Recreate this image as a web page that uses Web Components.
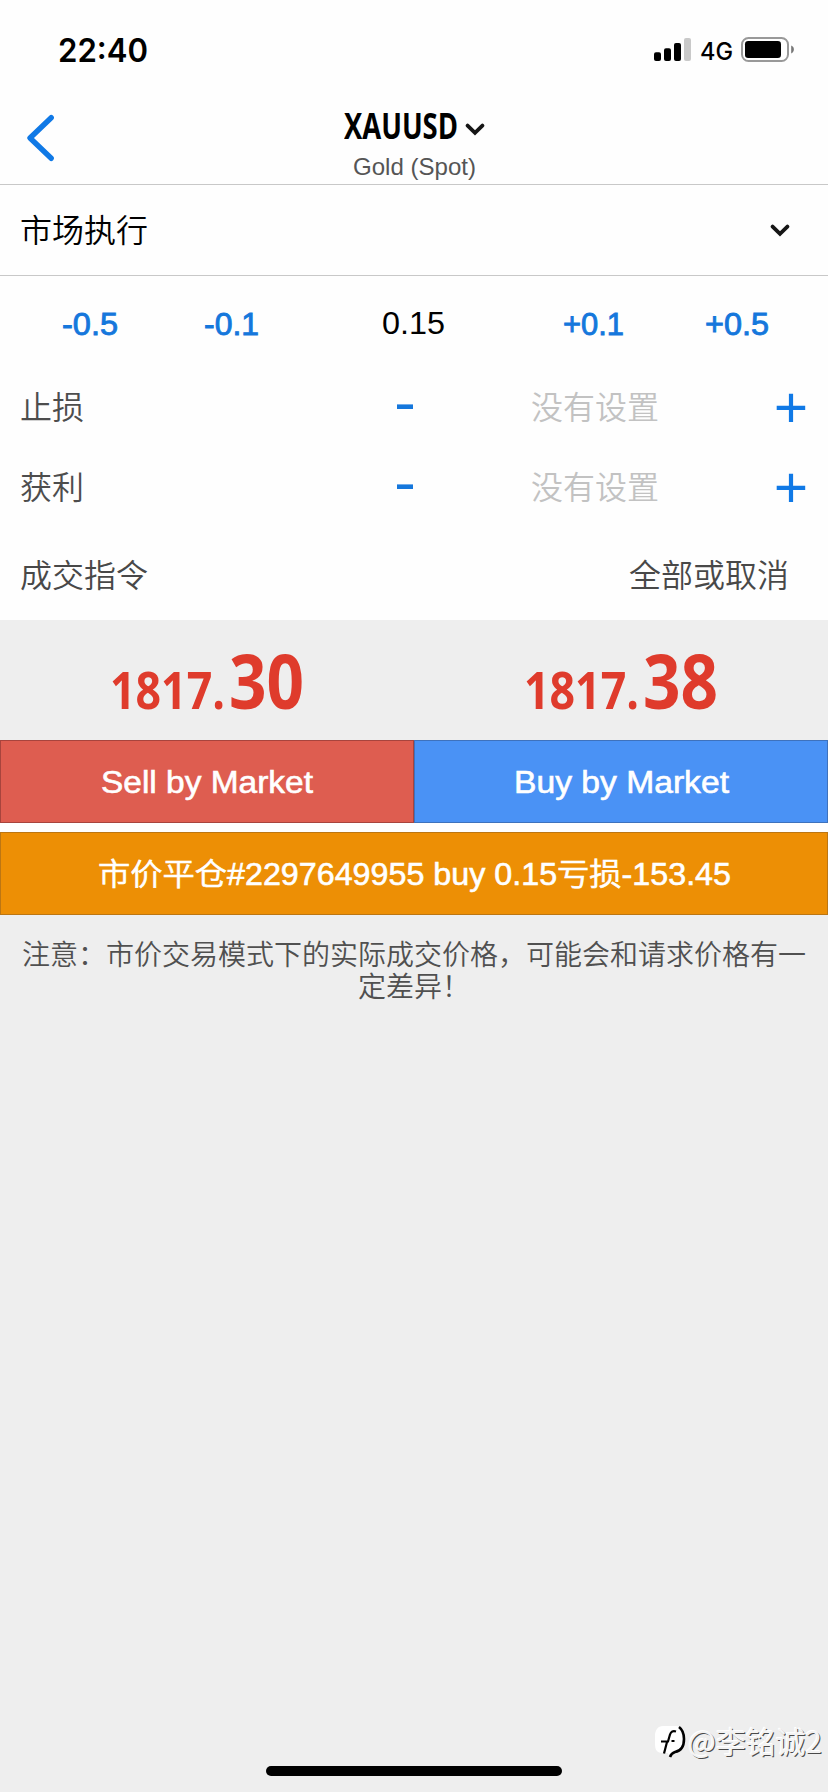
<!DOCTYPE html>
<html lang="zh-CN">
<head>
<meta charset="utf-8">
<title>XAUUSD</title>
<style>
html,body{margin:0;padding:0}
body{width:828px;height:1792px;overflow:hidden;background:#eee;font-family:"Liberation Sans","Noto Sans CJK SC",sans-serif}
</style>
</head>
<body>
<trade-app></trade-app>
<script>
const define=(name,html,setup)=>{
  const t=document.createElement('template');
  t.innerHTML=html;
  customElements.define(name,class extends HTMLElement{
    connectedCallback(){
      if(this.shadowRoot)return;
      this.attachShadow({mode:'open'}).appendChild(t.content.cloneNode(true));
      if(setup)setup(this,this.shadowRoot);
    }
  });
};

/* A single line of text squeezed or stretched to the width given in "w". */
define('fit-text',`<style>
:host{display:block;flex:none;white-space:nowrap}
span{display:inline-block;transform-origin:0 50%}
</style><span><slot></slot></span>`,(el,root)=>{
  const w=+el.getAttribute('w'),s=root.querySelector('span');
  const natural=s.getBoundingClientRect().width;
  el.style.width=w+'px';
  if(natural)s.style.transform='scaleX('+w/natural+')';
});

define('chevron-down',`<style>:host{display:block;flex:none;width:20px;height:14px}svg{display:block}</style>
<svg width="20" height="14" viewBox="0 0 20 14"><path d="M2.6 2.6 10 9.8 17.4 2.6" fill="none" stroke="#161616" stroke-width="3.8" stroke-linecap="round"/></svg>`);

define('status-bar',`<style>
:host{display:flex;box-sizing:border-box;height:100px;padding:0 33px 0 58px;align-items:center;font-family:Inter,sans-serif;color:#000}
.time{font-size:32px;font-weight:600}
.sp{flex:1}
.net{font-size:24px;font-weight:500;margin:2px 8px 0 8px}
svg{display:block;flex:none}
</style>
<fit-text class="time" w="90">22:40</fit-text><div class="sp"></div>
<svg width="38" height="24" viewBox="0 0 38 24"><g fill="#000"><rect y="14.3" width="7" height="8.7" rx="2"/><rect x="10" y="10.3" width="7" height="12.7" rx="2"/><rect x="20" y="5" width="7" height="18" rx="2"/></g><rect x="30" width="7" height="23" rx="2" fill="#c9c9c9"/></svg>
<fit-text class="net" w="33">4G</fit-text>
<svg width="54" height="26" viewBox="0 0 54 26"><rect x="1" y="1" width="46" height="23" rx="6.5" fill="none" stroke="#999" stroke-width="2"/><rect x="4" y="4" width="36" height="17" rx="3.2"/><path d="M50.2 8.6c3.6 1.3 3.6 6.5 0 7.8z" fill="#777"/></svg>`);

define('nav-bar',`<style>
:host{display:grid;grid-template-columns:80px 1fr 80px;box-sizing:border-box;height:85px;border-bottom:1px solid #c8c8c8}
.back{display:block;margin:13px 0 0 25px}
.mid{display:flex;flex-direction:column;align-items:center}
.t{display:flex;align-items:center;gap:7px;height:48px;padding-top:3px;box-sizing:border-box;font:700 36px/48px "Open Sans",sans-serif;color:#000}
.sub{font-size:24px;line-height:30px;color:#555;margin-top:4px}
chevron-down{margin-top:9px}
</style>
<svg class="back" width="34" height="50" viewBox="0 0 34 50"><path d="M26.2 4.7 5 25 26.2 45.3" fill="none" stroke="#1079e6" stroke-width="5.4" stroke-linecap="round" stroke-linejoin="round"/></svg>
<div class="mid"><div class="t"><fit-text w="114">XAUUSD</fit-text><chevron-down></chevron-down></div><fit-text class="sub" w="123">Gold (Spot)</fit-text></div><div></div>`);

define('execution-select',`<style>
:host{display:flex;box-sizing:border-box;height:91px;align-items:center;justify-content:space-between;padding:1px 38px 0 20px;border-bottom:1px solid #c8c8c8;font-size:32px;font-weight:350;line-height:48px;color:#000}
</style><slot></slot><chevron-down></chevron-down>`);

define('volume-stepper',`<style>
:host{display:grid;grid-template-columns:180px 102px 1fr 106px 182px;box-sizing:border-box;height:94px;align-items:center;font-size:32px;line-height:48px;color:#1577dc}
fit-text{-webkit-text-stroke:.9px #1577dc;justify-self:center;margin-top:1px}
.v{color:#000;-webkit-text-stroke:0;margin:0 0 0 5px}
</style>
<fit-text w="56">-0.5</fit-text><fit-text w="55">-0.1</fit-text><fit-text class="v" w="63">0.15</fit-text><fit-text w="61">+0.1</fit-text><fit-text w="64">+0.5</fit-text>`);

define('level-row',`<style>
:host{display:grid;grid-template-columns:376px 135px 1fr 52px;box-sizing:border-box;height:80px;padding-left:20px;align-items:center;font-size:32px;font-weight:350;line-height:48px;color:#4d4d4d}
.p{color:#c2c2c2}
svg{display:block}
::slotted(*),.p{position:relative;top:1px}
</style>
<slot></slot>
<svg width="18" height="6" viewBox="0 0 18 6"><path d="M1 2.7h16" stroke="#1577dc" stroke-width="4.6"/></svg>
<span class="p">没有设置</span>
<svg width="30" height="30" viewBox="0 0 30 30"><path d="M.7 15.900h28.500M15 1.700v28.300" stroke="#1079e6" stroke-width="4.2"/></svg>`);

define('fill-policy',`<style>
:host{display:flex;justify-content:space-between;align-items:center;box-sizing:border-box;height:93px;padding:4px 39px 0 20px;font-size:32px;font-weight:350;line-height:48px;color:#484848}
</style><slot name="label"></slot><slot name="value"></slot>`);

define('price-quote',`<style>
:host{display:flex;box-sizing:border-box;height:120px;justify-content:center;align-items:baseline;gap:4px;color:#df3b2c;font-family:"Open Sans",sans-serif;font-weight:700;line-height:110px;padding:5px 0 0}
.a{font-size:52px}.b{font-size:76px}
</style><fit-text class="a" w="115"><slot name="whole"></slot></fit-text><fit-text class="b" w="75"><slot name="pips"></slot></fit-text>`);

define('order-button',`<style>
:host{display:flex;box-sizing:border-box;height:83px;align-items:center;justify-content:center;background:var(--fill);border:1px solid var(--edge);color:#fff;font-size:30.5px;line-height:48px;-webkit-text-stroke:.6px #fff}
</style><slot></slot>`);

define('close-button',`<style>
:host{display:flex;box-sizing:border-box;height:83px;align-items:center;justify-content:center;background:#ed8f05;border:1px solid #bc7613;color:#fff;font-size:30.5px;font-weight:350;line-height:48px;-webkit-text-stroke:.6px #fff}
</style><slot></slot>`);

define('risk-note',`<style>
:host{display:block;padding:25px 21px 0;text-align:center;font-size:28px;font-weight:350;line-height:32px;color:#505050}
</style><slot></slot>`);

define('author-mark',`<style>
:host{position:absolute;right:6px;bottom:30px;display:flex;align-items:center;gap:2px;height:44px;font:350 30px/44px "Noto Sans CJK SC",sans-serif;color:#f3f3f3;text-shadow:-1px -1px 0 #fff,1px 1px 0 #4a4a4a}
svg{display:block;margin-top:4px}
</style>
<svg width="32" height="36" viewBox="0 0 32 36"><path d="M9 2h13c5 0 7 4 7 10v6c0 6-3 10-10 11l-4 4-1-4H9C3 29 1 26 1 20v-8C1 6 4 2 9 2z" fill="#fff"/><path d="M25 3c4 3 5 7 5 12 0 7-3 12-9 13-3 1-4 2-5 5" fill="none" stroke="#000" stroke-width="2.6"/><path d="M10 29.500l3-11.500M7 17.500h7l2-7c1-3 3-4 6-3M17.500 17h3" fill="none" stroke="#000" stroke-width="2.200"/></svg>
<fit-text w="134">@李铭诚2</fit-text>`);

define('home-indicator',`<style>
:host{position:absolute;left:266px;bottom:16px;width:296px;height:10px;border-radius:5px;background:#000}
</style>`);

define('trade-app',`<style>
:host{display:block;position:relative;width:828px;height:1792px;background:#eee}
.form{background:#fefefe}
.levels{margin-top:-3px}
.two{display:grid;grid-template-columns:1fr 1fr}
.actions{background:#fff;display:flex;flex-direction:column;gap:9px}
.sell{--fill:#de5d50;--edge:#a8443d}.buy{--fill:#4a92f5;--edge:#3e72bd}
</style>
<div class="form">
<status-bar></status-bar>
<nav-bar></nav-bar>
<execution-select>市场执行</execution-select>
<volume-stepper></volume-stepper>
<div class="levels"><level-row><span>止损</span></level-row><level-row><span>获利</span></level-row></div>
<fill-policy><span slot="label">成交指令</span><span slot="value">全部或取消</span></fill-policy>
</div>
<div class="two">
<price-quote><span slot="whole">1817.</span><span slot="pips">30</span></price-quote>
<price-quote><span slot="whole">1817.</span><span slot="pips">38</span></price-quote>
</div>
<div class="actions">
<div class="two"><order-button class="sell"><fit-text w="212">Sell by Market</fit-text></order-button><order-button class="buy"><fit-text w="215">Buy by Market</fit-text></order-button></div>
<close-button><fit-text w="633">市价平仓#2297649955 buy 0.15亏损-153.45</fit-text></close-button>
</div>
<risk-note>注意：市价交易模式下的实际成交价格，可能会和请求价格有一定差异！</risk-note>
<author-mark></author-mark>
<home-indicator></home-indicator>`);
</script>
</body>
</html>
